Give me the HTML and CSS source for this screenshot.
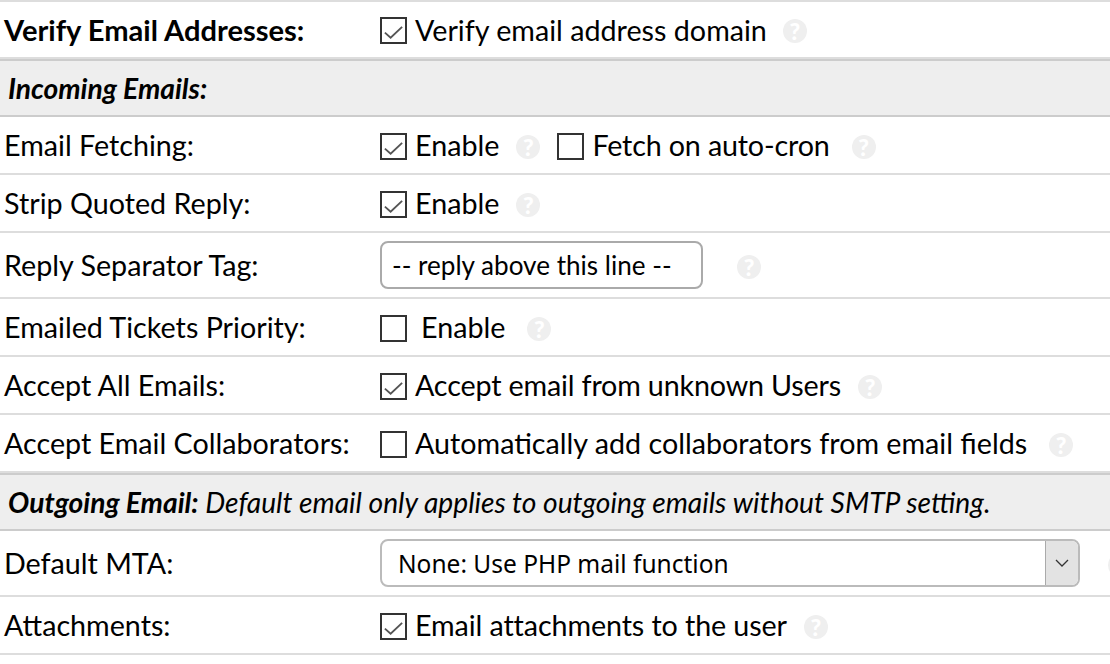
FILE: index.html
```html
<!DOCTYPE html>
<html lang="en">
<head>
<meta charset="utf-8">
<title>Email Settings</title>
<link rel="stylesheet" href="styles.css">
</head>
<body>
<div class="settings">
  <div class="row h59 top-line">
    <div class="label bold">Verify Email Addresses:</div>
    <div class="field"><span class="cb checked"><svg viewBox="0 0 16 16"><path d="M2 9.5l4 3.5 8-7.5"/></svg></span><span class="txt">Verify email address domain</span><span class="help gap16">?</span></div>
  </div>
  <div class="section">
    <em class="sec-title strong">Incoming Emails:</em>
  </div>
  <div class="row h58">
    <div class="label">Email Fetching:</div>
    <div class="field"><span class="cb checked"><svg viewBox="0 0 16 16"><path d="M2 9.5l4 3.5 8-7.5"/></svg></span><span class="txt">Enable</span><span class="help gap17">?</span><span class="cb second"></span><span class="txt tight">Fetch on auto-cron</span><span class="help gap22">?</span></div>
  </div>
  <div class="row h58">
    <div class="label">Strip Quoted Reply:</div>
    <div class="field"><span class="cb checked"><svg viewBox="0 0 16 16"><path d="M2 9.5l4 3.5 8-7.5"/></svg></span><span class="txt">Enable</span><span class="help gap17">?</span></div>
  </div>
  <div class="row h66">
    <div class="label">Reply Separator Tag:</div>
    <div class="field"><span class="input">-- reply above this line --</span><span class="help gap34">?</span></div>
  </div>
  <div class="row h58">
    <div class="label">Emailed Tickets Priority:</div>
    <div class="field"><span class="cb"></span><span class="txt wide">Enable</span><span class="help gap22">?</span></div>
  </div>
  <div class="row h58">
    <div class="label">Accept All Emails:</div>
    <div class="field"><span class="cb checked"><svg viewBox="0 0 16 16"><path d="M2 9.5l4 3.5 8-7.5"/></svg></span><span class="txt tight">Accept email from unknown Users</span><span class="help gap17">?</span></div>
  </div>
  <div class="row h58">
    <div class="label">Accept Email Collaborators:</div>
    <div class="field"><span class="cb"></span><span class="txt">Automatically add collaborators from email fields</span><span class="help gap22">?</span></div>
  </div>
  <div class="section">
    <em class="sec-title"><b>Outgoing Email:</b> Default email only applies to outgoing emails without SMTP setting.</em>
  </div>
  <div class="row h66">
    <div class="label">Default MTA:</div>
    <div class="field"><span class="select"><span class="select-text">None: Use PHP mail function</span><span class="select-btn"><svg viewBox="0 0 14 8"><path d="M1 1l6 6 6-6"/></svg></span></span><span class="help cut"></span></div>
  </div>
  <div class="row h58">
    <div class="label">Attachments:</div>
    <div class="field"><span class="cb checked"><svg viewBox="0 0 16 16"><path d="M2 9.5l4 3.5 8-7.5"/></svg></span><span class="txt tighter">Email attachments to the user</span><span class="help gap17">?</span></div>
  </div>
</div>
</body>
</html>
```
FILE: styles.css
```css
html, body {
  margin: 0;
  padding: 0;
  background: #fff;
  overflow: hidden;
}
.settings {
  width: 1110px;
  height: 664px;
  overflow: hidden;
  font-family: Lato, "Liberation Sans", sans-serif;
  font-size: 28.7px;
  color: #000;
}
.row {
  display: flex;
  align-items: center;
  box-sizing: border-box;
  border-bottom: 2px solid #ddd;
}
.top-line { border-top: 2px solid #ddd; }
.h59 { height: 59px; }
.h58 { height: 58px; }
.h66 { height: 66px; }
.label {
  flex: 0 0 380px;
  box-sizing: border-box;
  padding-left: 4px;
}
.bold { font-weight: 700; font-size: 29.1px; }
.field {
  display: flex;
  align-items: center;
  flex: 1;
  min-width: 0;
  white-space: nowrap;
}
.cb {
  flex: none;
  box-sizing: border-box;
  width: 27px;
  height: 27px;
  border: 2px solid #333;
  display: flex;
  margin-top: 2px;
}
.cb svg { width: 23px; height: 23px; }
.cb path {
  fill: none;
  stroke: #555;
  stroke-width: 1.3;
}
.second { margin-left: 17px; }
.txt { margin-left: 8px; }
.wide { margin-left: 14px; }
.tight { letter-spacing: -0.16px; }
.tighter { letter-spacing: -0.1px; }
.help {
  flex: none;
  display: inline-flex;
  align-items: center;
  justify-content: center;
  width: 24px;
  height: 24px;
  border-radius: 50%;
  background: #efefef;
  color: #fff;
  font-size: 23px;
  font-weight: 900;
  margin-top: 3px;
}
.gap16 { margin-left: 16px; }
.gap17 { margin-left: 17px; }
.gap22 { margin-left: 22px; }
.gap34 { margin-left: 34px; }
.cut { margin-left: 28px; }
.input {
  flex: none;
  box-sizing: border-box;
  width: 323px;
  height: 48px;
  border: 2px solid #aaa;
  border-radius: 8px;
  padding-left: 10px;
  display: flex;
  align-items: center;
  font-size: 26.1px;
}
.select {
  flex: none;
  box-sizing: border-box;
  display: flex;
  width: 700px;
  height: 48px;
  border: 2px solid #bbb;
  border-radius: 8px;
  overflow: hidden;
}
.select-text {
  flex: 1;
  display: flex;
  align-items: center;
  padding-left: 16px;
  font-family: "Noto Sans", Lato, sans-serif;
  font-size: 24.5px;
  color: #000;
}
.select-btn {
  flex: none;
  box-sizing: border-box;
  width: 33px;
  background: #e3e3e3;
  border-left: 1px solid #aaa;
  display: flex;
  align-items: center;
  justify-content: center;
}
.select-btn svg { width: 14px; height: 8px; }
.select-btn path {
  fill: none;
  stroke: #333;
  stroke-width: 1.3;
}
.section {
  box-sizing: border-box;
  height: 58px;
  background: #eee;
  border-top: 2px solid #ccc;
  border-bottom: 2px solid #ccc;
  display: flex;
  align-items: center;
  padding-left: 8px;
  font-size: 28.2px;
}
.sec-title {
  font-style: italic;
  font-weight: 400;
}
.strong { font-weight: 700; }
.sec-title b { font-weight: 700; }
```
